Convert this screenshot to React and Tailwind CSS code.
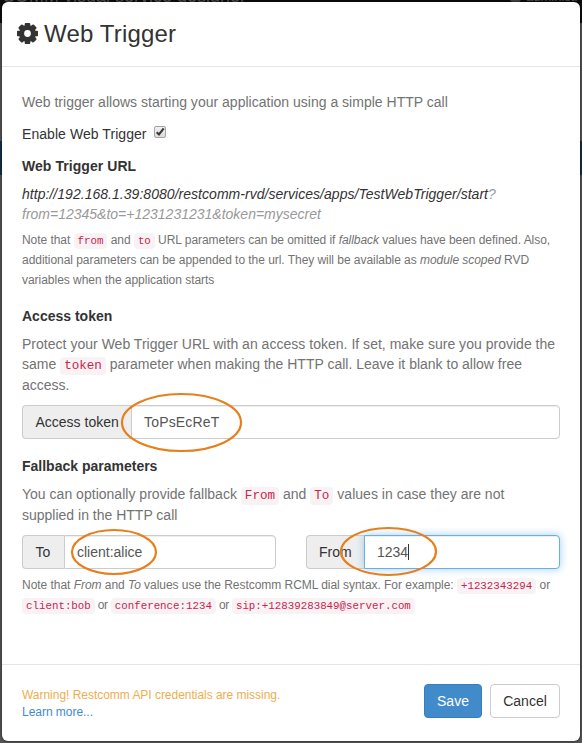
import React from "react";

function CogIcon() {
  return (
    <svg viewBox="-40 88 1616 1616" className="mb-px h-[21px] w-[21px] shrink-0 fill-[#333] stroke-[#333]" strokeWidth="120" strokeLinejoin="round">
      <path d="M1088 896a320 320 0 1 0 -640 0 320 320 0 1 0 640 0zM1536 787v222q0 12-8 23t-20 13l-185 28q-19 54-39 91 35 50 107 138 10 12 10 25t-9 23q-27 37-99 108t-94 71q-12 0-26-9l-138-108q-44 23-91 38-16 136-29 186-7 28-36 28h-222q-14 0-24.500-8.500t-11.500-21.500l-28-184q-49-16-90-37l-141 107q-10 9-25 9-14 0-25-11-126-114-165-168-7-10-7-23 0-12 8-23 15-21 51-66.500t54-70.500q-27-50-41-99l-183-27q-13-2-21-12.500t-8-23.500v-222q0-12 8-23t19-13l186-28q14-46 39-92-40-57-107-138-10-12-10-24 0-10 9-23 26-36 98.500-107.500t94.500-71.500q13 0 26 10l138 107q44-23 91-38 16-136 29-186 7-28 36-28h222q14 0 24.500 8.500t11.500 21.500l28 184q49 16 90 37l142-107q9-9 24-9 13 0 25 10 129 119 165 170 7 8 7 22 0 12-8 23-15 21-51 66.500t-54 70.500q26 50 41 98l183 28q13 2 21 12.500t8 23.500z" />
    </svg>
  );
}

function Code({ children }) {
  return (
    <code className="rounded-[4px] bg-[#f9f2f4] px-[4px] py-[2px] font-['Liberation_Mono',monospace] text-[90%] tracking-normal text-[#c7254e]">
      {children}
    </code>
  );
}

function Line({ className = "h-5", children }) {
  return <span className={`block whitespace-nowrap ${className}`}>{children}</span>;
}

function Ring({ className }) {
  return (
    <svg className={`pointer-events-none absolute overflow-visible ${className}`} preserveAspectRatio="none" viewBox="0 0 100 100">
      <ellipse cx="50" cy="50" rx="50" ry="50" fill="none" stroke="#e67f1c" strokeWidth="2.2" vectorEffect="non-scaling-stroke" />
    </svg>
  );
}

function InputGroup({ label, labelWidth, value, focused, ring }) {
  return (
    <div className="relative flex h-[34px]">
      <span className={`${labelWidth} flex shrink-0 items-center rounded-l-[4px] border border-r-0 border-[#ccc] bg-[#eee] text-[#333]`}>
        {label}
      </span>
      <span
        className={`flex min-w-0 flex-1 items-center rounded-r-[4px] border bg-white pl-3 text-[#555] ${
          focused
            ? "border-[#66afe9] shadow-[inset_0_1px_1px_rgba(0,0,0,0.075),0_0_8px_rgba(102,175,233,0.6)]"
            : "border-[#ccc] shadow-[inset_0_1px_1px_rgba(0,0,0,0.075)]"
        }`}
      >
        {value}
        {focused && <span className="h-4 w-px bg-[#333]" />}
      </span>
      <Ring className={ring} />
    </div>
  );
}

export default function App() {
  return (
    <div className="relative h-[743px] w-[582px] overflow-hidden bg-[#555] font-['Liberation_Sans',Arial,sans-serif] text-[14px] leading-5 text-[#333]">
      <div className="absolute inset-0 flex flex-col">
        <div className="relative h-[23px] overflow-hidden bg-[#0c0c0c] text-[#555]">
          <span className="absolute -top-[14px] left-[2px] text-[18px] whitespace-nowrap leading-5">COMM visual service designer</span>
          <span className="absolute -top-[13px] left-[526px] text-[13px] leading-5">administr</span>
          <span className="absolute -top-[8px] left-[510px] h-[10px] w-[11px] rounded-[3px] bg-[#444]" />
        </div>
        <div className="h-[118px] bg-[#555]" />
        <div className="h-[34px] bg-[#14304c]" />
      </div>

      <div className="relative mx-[2px] mt-[2px] flex h-[739px] flex-col rounded-[6px] bg-white shadow-[0_0_3px_rgba(0,0,0,0.7)]">
        <header className="flex h-[65px] items-center gap-[6px] border-b border-[#e5e5e5] pl-[15px]">
          <CogIcon />
          <h4 className="text-[24px] leading-[26px] tracking-[0.18px]">Web Trigger</h4>
        </header>

        <main className="flex-1 px-5 pt-[25px]">
          <p className="tracking-[0.01px] text-[#737373]">Web trigger allows starting your application using a simple HTTP call</p>

          <div className="mt-3 flex h-5 items-center">
            <span className="tracking-[0.06px]">Enable Web Trigger</span>
            <span className="mb-1 ml-[7px] flex h-3 w-3 items-center justify-center rounded-[2px] border border-[#a4a4a4] bg-gradient-to-b from-[#f0f0f0] to-[#dcdcdc]">
              <svg viewBox="0 0 10 10" className="h-[10px] w-[10px] shrink-0" fill="none" stroke="#393939" strokeWidth="2.1">
                <path d="M1.700 5.200 4 7.500 8.700 1.400" />
              </svg>
            </span>
          </div>

          <h5 className="mt-3 font-bold tracking-[0.06px]">Web Trigger URL</h5>
          <p className="mt-2 italic">
            <Line className="h-5 tracking-[0.035px]">
              http://192.168.1.39:8080/restcomm-rvd/services/apps/TestWebTrigger/start<span className="text-[#999]">?</span>
            </Line>
            <Line className="h-5 text-[#999]">from=12345&amp;to=+1231231231&amp;token=mysecret</Line>
          </p>
          <p className="mt-[6px] text-[12px] text-[#737373]">
            <Line className="h-5 tracking-[-0.053px]">
              Note that <Code>from</Code> and <Code>to</Code> URL parameters can be omitted if <em>fallback</em> values have been defined. Also,
            </Line>
            <Line className="h-5 tracking-[-0.045px]">
              additional parameters can be appended to the url. They will be available as <em>module scoped</em> RVD
            </Line>
            <Line className="h-5 tracking-[-0.03px]">variables when the application starts</Line>
          </p>

          <h5 className="mt-4 font-bold">Access token</h5>
          <p className="mt-2 text-[#737373]">
            <Line className="h-5 tracking-[0.02px]">Protect your Web Trigger URL with an access token. If set, make sure you provide the</Line>
            <Line className="h-[21px]">
              same <Code>token</Code> parameter when making the HTTP call. Leave it blank to allow free
            </Line>
            <Line>access.</Line>
          </p>
          <div className="mt-[10px]">
            <InputGroup
              label="Access token"
              labelWidth="w-[109px] pl-[12.500px]"
              value={<span className="tracking-[0.18px]">ToPsEcReT</span>}
              ring="-top-[11px] left-[100px] h-[57px] w-[119px]"
            />
          </div>

          <h5 className="mt-[17px] font-bold">Fallback parameters</h5>
          <p className="mt-2 text-[#737373]">
            <Line className="h-[21px] tracking-[0.018px]">
              You can optionally provide fallback <Code>From</Code> and <Code>To</Code> values in case they are not
            </Line>
            <Line>supplied in the HTTP call</Line>
          </p>
          <div className="mt-[10px] grid grid-cols-[254px_254px] gap-[30px]">
            <InputGroup label="To" labelWidth="w-[42px] pl-[12.500px]" value="client:alice" ring="-top-[5px] left-[50px] h-[44px] w-[84px]" />
            <InputGroup label="From" labelWidth="w-[58px] pl-3" value="1234" focused ring="-top-[7px] left-[35px] h-[47px] w-[95px]" />
          </div>
          <p className="mt-[6px] text-[12px] text-[#737373]">
            <Line className="h-[21px] tracking-[-0.04px]">
              Note that <em>From</em> and <em>To</em> values use the Restcomm RCML dial syntax. For example: <Code>+1232343294</Code> or
            </Line>
            <Line className="-mt-px h-5 tracking-[-0.35px]">
              <Code>client:bob</Code> or <Code>conference:1234</Code> or <Code>sip:+12839283849@server.com</Code>
            </Line>
          </p>
        </main>

        <footer className="flex h-[77px] items-start border-t border-[#e5e5e5] px-5 pt-[19px]">
          <div className="flex-1 pt-[3px] text-[12px] leading-[17px] tracking-[-0.03px]">
            <p className="text-[#f0ad4e]">Warning! Restcomm API credentials are missing.</p>
            <a className="text-[#428bca]">Learn more...</a>
          </div>
          <div className="flex gap-2">
            <button className="h-[34px] w-[58px] rounded-[4px] border border-[#357ebd] bg-[#428bca] text-white">Save</button>
            <button className="h-[34px] w-[70px] rounded-[4px] border border-[#ccc] bg-white">Cancel</button>
          </div>
        </footer>
      </div>
    </div>
  );
}
